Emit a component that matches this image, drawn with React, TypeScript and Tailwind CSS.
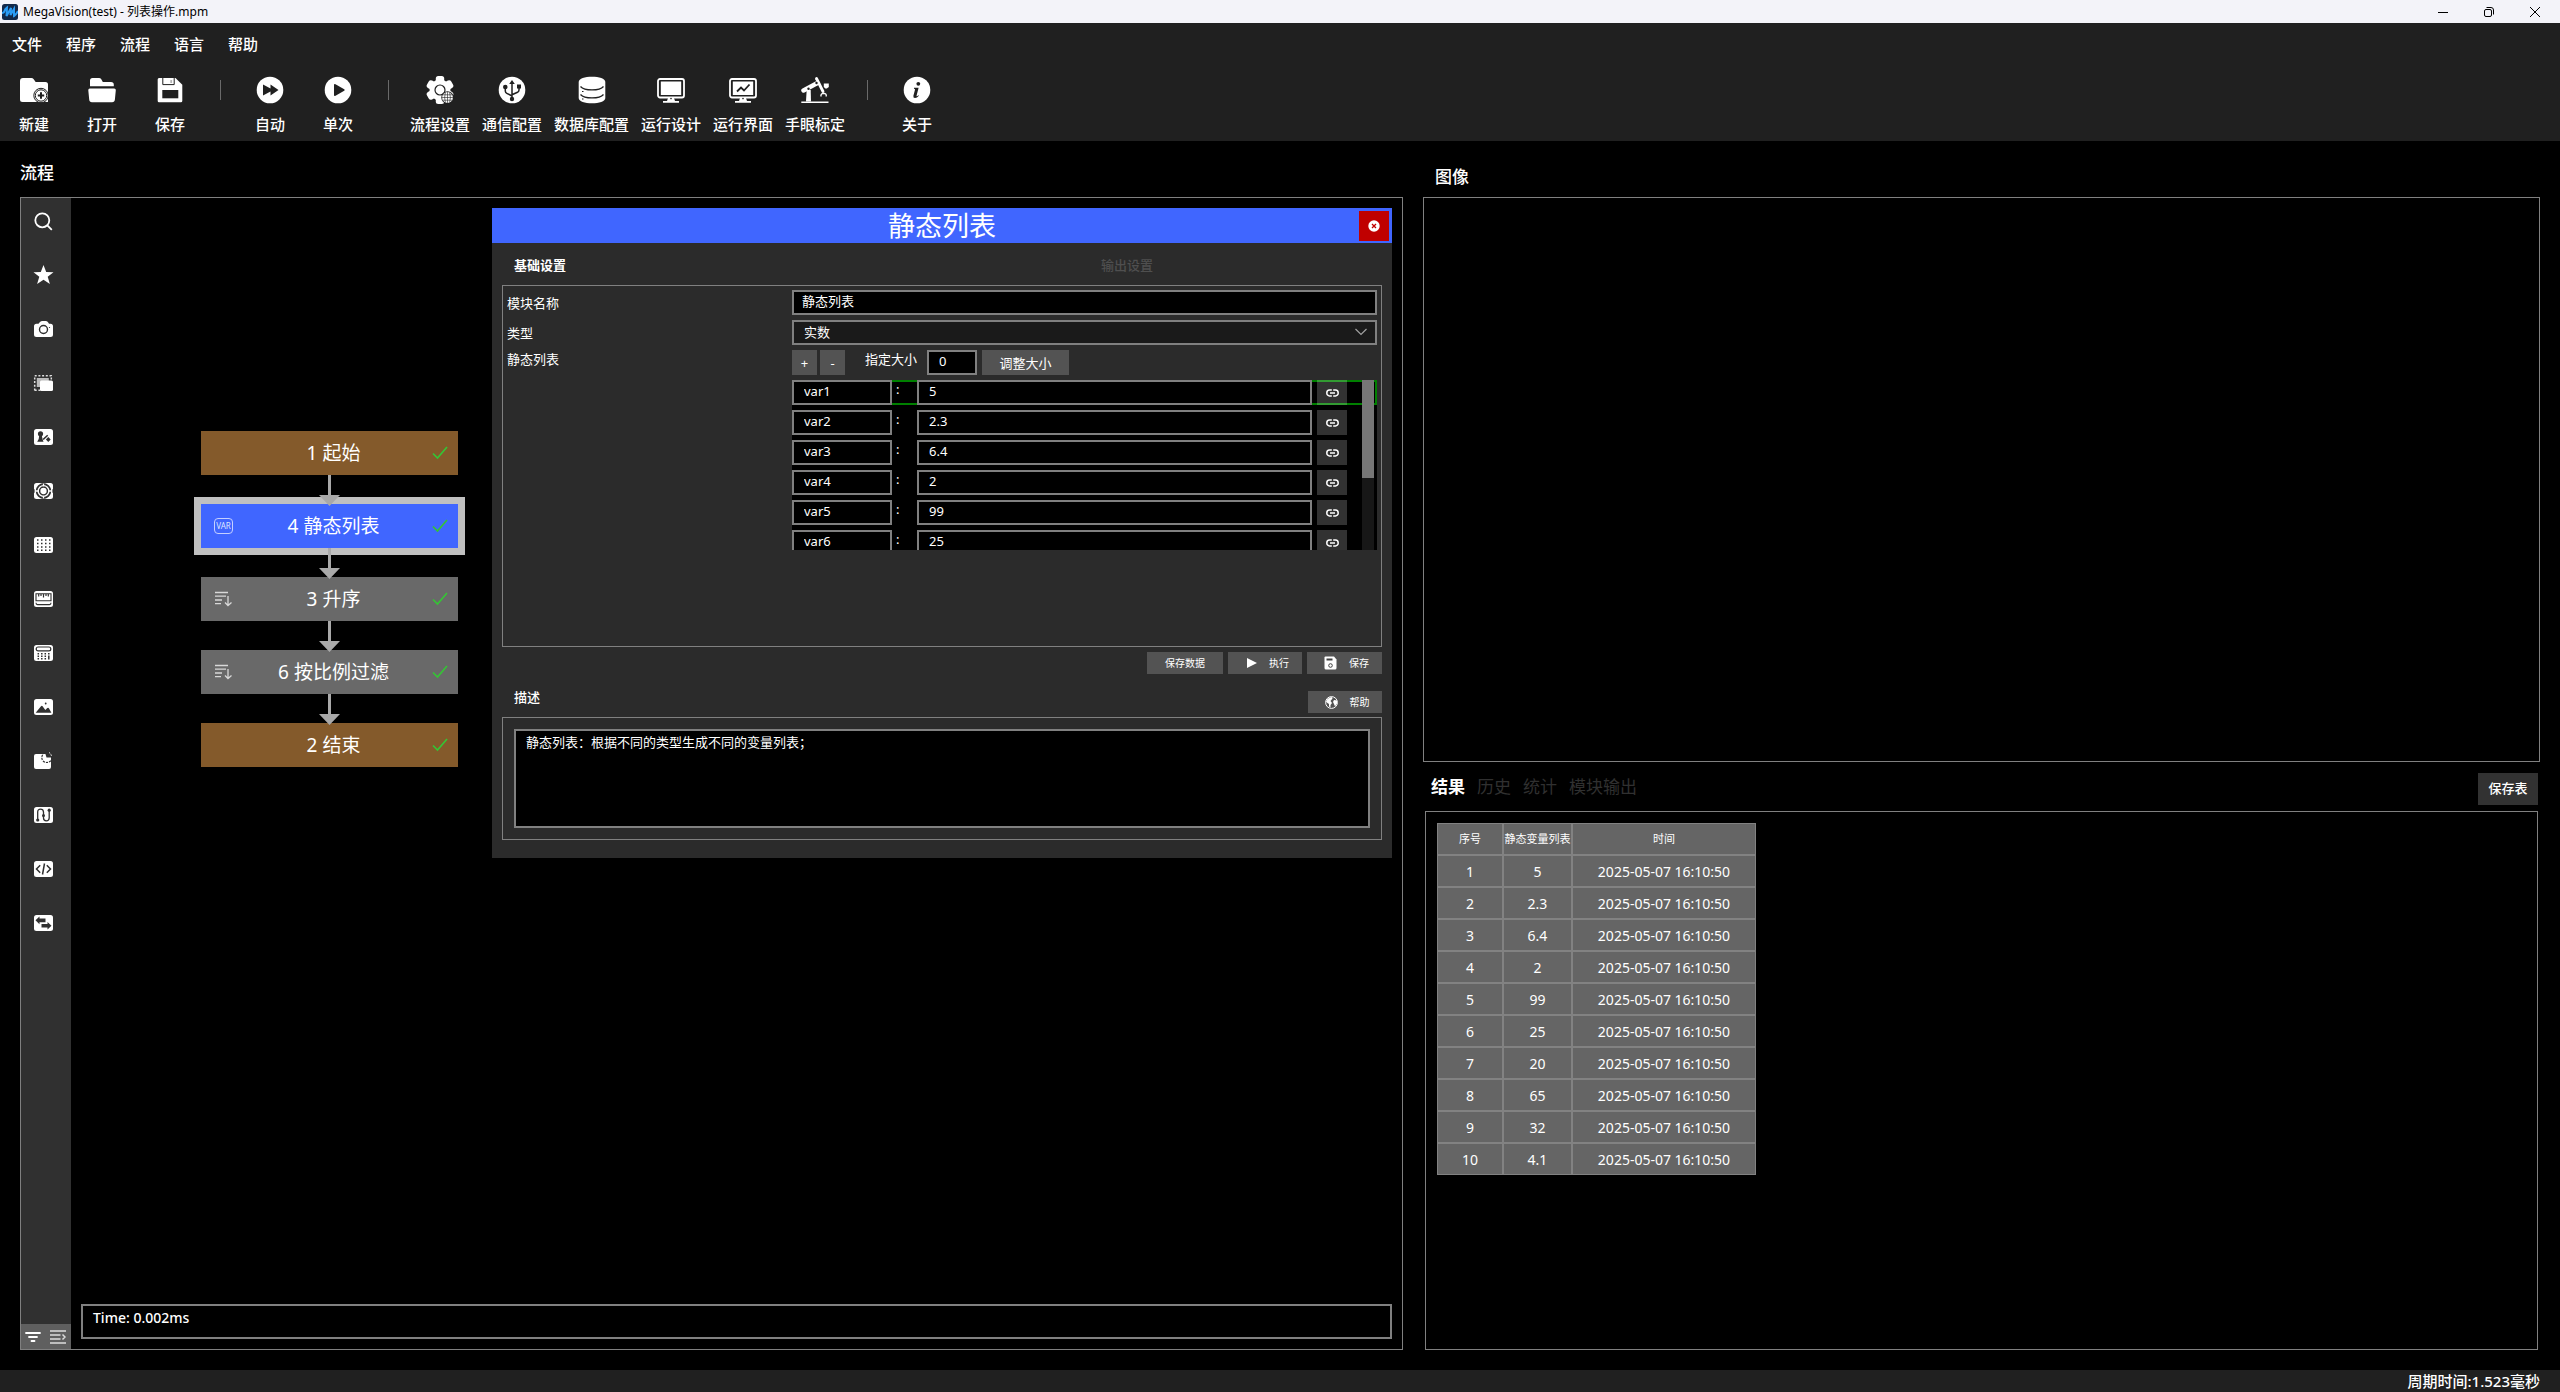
import React, { useState } from "react";

type IconProps = { children: React.ReactNode };

// 28px toolbar glyph
const ToolIcon = ({ children }: IconProps) => (
  <svg className="h-7 w-7" viewBox="0 0 28 28" fill="#fff" aria-hidden="true">
    {children}
  </svg>
);

// 19x16 sidebar glyph
const SideIcon = ({ children }: IconProps) => (
  <svg className="h-4 w-[19px] overflow-visible" viewBox="0 0 19 16" fill="#fff" aria-hidden="true">
    {children}
  </svg>
);

const Tile = () => <rect width="19" height="16" rx="2.5" />;

const Monitor = ({ children }: IconProps) => (
  <ToolIcon>
    <rect x="1" y="3" width="26" height="18.5" rx="2" fill="none" stroke="#fff" strokeWidth="1.8" />
    {children}
    <path d="M11 22h6l1 3h-8z M6 25h16v1.8H6z" />
    <circle cx="14" cy="22.6" r=".8" fill="#202020" />
  </ToolIcon>
);

const menus = ["文件", "程序", "流程", "语言", "帮助"];

const toolGroups = [
  [
    {
      label: "新建",
      icon: (
        <ToolIcon>
          <path d="M3 2h8.5q1.2 0 2 1l2.2 3H25.500q2.500 0 2.500 2.500V26H2.500Q0 26 0 23.500V5Q0 2 3 2z" />
          <circle cx="21" cy="19.500" r="7.200" stroke="#202020" strokeWidth="1" />
          <circle cx="21" cy="19.500" r="5.700" stroke="#202020" strokeWidth="1" />
          <path d="M21 16.300v6.400M17.800 19.500h6.400" stroke="#202020" strokeWidth="2" />
        </ToolIcon>
      ),
    },
    {
      label: "打开",
      icon: (
        <ToolIcon>
          <path d="M4.500 2h6.500q1.500 0 2.300 1.200L14.800 6H23q2.800 0 2.800 2.800V10.200H2V4.500Q2 2 4.500 2z" />
          <path d="M1.800 12.600h24.400q1.800 0 1.600 1.700l-.9 9.200q-.3 2.700-2.800 2.700H4q-2.600 0-2.800-2.700L.3 14.300q-.1-1.700 1.500-1.700z" />
        </ToolIcon>
      ),
    },
    {
      label: "保存",
      icon: (
        <ToolIcon>
          <path d="M3 2h16.500L26.300 8.800V24.800q0 1.500-1.500 1.500H3q-1.300 0-1.300-1.500V3.500Q1.700 2 3 2z" />
          <path d="M6.800 2v6.600h11.400V2" fill="none" stroke="#202020" strokeWidth="1" />
          <path d="M14.300 4v3h1.800v-3z" fill="#b5b5b5" />
          <path d="M6.300 14h16v8.300h-16z" fill="#202020" />
        </ToolIcon>
      ),
    },
  ],
  [
    {
      label: "自动",
      icon: (
        <ToolIcon>
          <circle cx="14" cy="14" r="13.300" />
          <path d="M7 8.500l7.500 4V8.500L22.500 14l-8 5.500V15.500L7 19.500z" fill="#202020" />
        </ToolIcon>
      ),
    },
    {
      label: "单次",
      icon: (
        <ToolIcon>
          <circle cx="14" cy="14" r="13.300" />
          <path d="M10 9q0-1.500 1.500-.8l8.700 5q1.200.8 0 1.600l-8.700 5q-1.500.7-1.500-.8z" fill="#202020" />
        </ToolIcon>
      ),
    },
  ],
  [
    {
      label: "流程设置",
      icon: (
        <ToolIcon>
          <circle cx="14" cy="14" r="10.500" />
          {[0, 60, 120, 180, 240, 300].map((a) => (
            <rect key={a} x="9.800" y="0" width="8.400" height="8" rx="2.500" transform={`rotate(${a} 14 14)`} />
          ))}
          <circle cx="14" cy="14" r="5" fill="none" stroke="#202020" strokeWidth="1.200" />
          <circle cx="21.500" cy="21.500" r="6.200" fill="#202020" />
          <circle cx="21.500" cy="21.500" r="5.400" />
          <path
            d="M16 21.500h11M17 18.800h9M17 24.200h9M21.500 16v11M19.400 16.500q-1.600 5 0 10M23.600 16.500q1.600 5 0 10"
            fill="none"
            stroke="#202020"
            strokeWidth=".6"
          />
        </ToolIcon>
      ),
    },
    {
      label: "通信配置",
      icon: (
        <ToolIcon>
          <circle cx="14" cy="14" r="13.300" />
          <path d="M14 22V7M7.300 12v3q0 1.500 1.500 2.300L14 20M21 11v3q0 1.500-1.500 2.300L14 18.800" fill="none" stroke="#202020" strokeWidth="1.500" />
          <path d="M14 4l2.800 4h-5.600zM19 8.500h4v4h-4z" fill="#202020" />
          <circle cx="7.300" cy="11" r="2.300" fill="#202020" />
          <circle cx="14" cy="23" r="2.200" fill="#202020" />
        </ToolIcon>
      ),
    },
    {
      label: "数据库配置",
      icon: (
        <ToolIcon>
          <path d="M.7 6C.7 2.500 7 .7 14 .7S27.300 2.500 27.300 6v16c0 3.500-6.300 5.300-13.300 5.300S.7 25.500.7 22z" />
          <path d="M2.500 10.500c4 4.600 19 4.600 23 0M2.500 18.500c4 4.600 19 4.600 23 0" fill="none" stroke="#202020" strokeWidth="1.300" />
          <path d="M4 15.500h1.500M4 23h1.500" stroke="#202020" strokeWidth="1.200" />
        </ToolIcon>
      ),
    },
    {
      label: "运行设计",
      icon: (
        <Monitor>
          <path d="M3.800 5.500h20.400v13.500H3.800z" />
        </Monitor>
      ),
    },
    {
      label: "运行界面",
      icon: (
        <Monitor>
          <path d="M3.800 5.500h20.400v13.500H3.800z" />
          <path d="M8 15.500l4-4 3 3 5.500-6" fill="none" stroke="#202020" strokeWidth="1.800" />
        </Monitor>
      ),
    },
    {
      label: "手眼标定",
      icon: (
        <ToolIcon>
          <path d="M.3 25.500h27.200v1.500H.3z" />
          <path d="M5 25.500l.7-11.500h4L10 25.500z" />
          <path d="M2.500 14.500L15.500 7.500" stroke="#fff" strokeWidth="4.500" strokeLinecap="round" />
          <path d="M15.500 2.500l6.500 13" stroke="#fff" strokeWidth="2.800" strokeLinecap="round" />
          <circle cx="15.500" cy="7" r="1.200" fill="#202020" />
          <circle cx="7.500" cy="12.800" r="1.200" fill="#202020" />
          <path d="M20 20.500q-.5-3 2.700-3.300 3 .3 2.500 3.300" fill="none" stroke="#fff" strokeWidth="1.400" />
          <path d="M22.800 7.500h5v3.500l-2 1.500h-1.500l-1.500-1.500z" />
        </ToolIcon>
      ),
    },
  ],
  [
    {
      label: "关于",
      icon: (
        <ToolIcon>
          <circle cx="14" cy="14" r="13.300" />
          <circle cx="15.300" cy="7.800" r="1.900" fill="#202020" />
          <path d="M11 11.800h4.600l-2 7.800q-.3 1.300 1.800-.4l.5.600q-2 2.300-4 2.200-2 0-1.500-2.200l1.600-6q.2-1-1-1z" fill="#202020" />
        </ToolIcon>
      ),
    },
  ],
];

const D = "#303030";

const sideTools = [
  {
    name: "搜索",
    icon: (
      <g fill="none" stroke="#fff" strokeWidth="1.800">
        <circle cx="8.300" cy="7.300" r="7" />
        <path d="M13.300 12.300l4.500 4.500" />
      </g>
    ),
  },
  { name: "收藏", icon: <path d="M9.500-2l2.700 7 7.300.2-5.800 4.500 2.200 7.200-6.400-4.200-6.400 4.200 2.200-7.200L-.5 5.200l7.300-.2z" /> },
  {
    name: "相机",
    icon: (
      <>
        <path d="M5.500 1.500Q6.500 0 8 0h4q1.500 0 2.200 1.500L15 2.800h1.500Q19 2.800 19 5.300v8.200q0 2.500-2.500 2.500h-14Q0 16 0 13.500V5.300q0-2.500 2.500-2.500h2z" />
        <circle cx="9.500" cy="8.500" r="4" fill="none" stroke={D} strokeWidth="1.400" />
        <circle cx="15.500" cy="6.500" r=".6" fill={D} />
      </>
    ),
  },
  {
    name: "区域",
    icon: (
      <>
        <path d="M.7 15.500V.7h16.600v4M.7 15.300h6" fill="none" stroke="#ddd" strokeWidth="1.500" strokeDasharray="2 1.700" />
        <path d="M2.800 3h12v9h-12z" fill="#bbb" />
        <rect x="6" y="5.500" width="13" height="10.500" rx="1.500" />
      </>
    ),
  },
  {
    name: "定位",
    icon: (
      <>
        <Tile />
        <g fill={D}>
          <circle cx="6.500" cy="4.800" r="2.600" />
          <path d="M5.300 6h2.400l.8 4 1 2.800H3.200l1.500-2.800z" />
          <path d="M8.500 10l4.700-4.300 1 1-4.500 4.300z" />
          <path d="M14.300 8l2.400 2.500-2.400 2.500-2.400-2.500z" />
        </g>
      </>
    ),
  },
  {
    name: "标定",
    icon: (
      <>
        <Tile />
        <circle cx="9.500" cy="8" r="6.900" fill="none" stroke={D} strokeWidth="1.700" />
        <circle cx="9.500" cy="8" r="3.900" fill="none" stroke={D} strokeWidth="1.500" />
        <path d="M9.500 0v3.300M9.500 12.700V16M1 8h3.800M14.200 8H18" stroke="#fff" strokeWidth="1.300" />
        <path d="M7.500 0h4M7.500 16h4M0 6.300v3.400M19 6.300v3.400" stroke={D} strokeWidth="1.200" />
      </>
    ),
  },
  {
    name: "网格",
    icon: (
      <>
        <Tile />
        <path d="M3 3h14M3 6.500h14M3 10h14M3 13.300h14" stroke={D} strokeWidth="1.500" strokeDasharray="1.500 2.500" />
      </>
    ),
  },
  {
    name: "测量",
    icon: (
      <>
        <Tile />
        <path d="M2 2.800h15v7H2zM2 11.800q0 1.800 1.500 1.800h12q1.500 0 1.500-1.800" fill="none" stroke={D} strokeWidth="1.100" />
        <path d="M4.700 3v2.500M7 3v2M9.500 3v3.500M12 3v2M14.300 3v2.500" stroke={D} strokeWidth="1.200" />
      </>
    ),
  },
  {
    name: "计算",
    icon: (
      <>
        <Tile />
        <rect x="2.200" y="2" width="14.600" height="3.800" rx="1.900" fill="none" stroke={D} strokeWidth="1.200" />
        <path d="M4.300 8v6.500M7.800 8v6.500M11.300 8v6.500" stroke={D} strokeWidth="1.500" strokeDasharray="1.500 1" />
        <path d="M14.800 8v1.500M14.800 10.500v4" stroke={D} strokeWidth="1.500" />
      </>
    ),
  },
  {
    name: "图像",
    icon: (
      <>
        <Tile />
        <path d="M1.700 13.800L7 7.200q.8-.8 1.600 0L11.300 11l2-2q1-.8 1.600.2l2.500 4.600z" fill={D} />
        <circle cx="11.700" cy="4.500" r=".9" fill={D} />
      </>
    ),
  },
  {
    name: "缺陷",
    icon: (
      <>
        <rect y="1" width="17" height="15" rx="2" />
        <circle cx="12.800" cy="4.500" r="5" fill="none" stroke={D} strokeWidth="1.200" strokeDasharray="2.200 1" />
        <path d="M12.500 4.500L11-.5q7 0 6.500 5z" fill={D} />
        <path d="M15-.5q2.300 1.300 2.500 4" fill="none" stroke="#fff" strokeWidth="1" strokeDasharray="1.500 1.200" />
      </>
    ),
  },
  {
    name: "流程",
    icon: (
      <>
        <Tile />
        <path d="M3.700 13V5q0-2.800 2.800-2.800T9.500 5v6q0 2.800 2.800 2.800t2.900-2.800V3" fill="none" stroke={D} strokeWidth="1.300" />
        <g fill={D}>
          <circle cx="3.700" cy="13" r="1.600" />
          <circle cx="9.500" cy="8.500" r="1.500" />
          <circle cx="15.200" cy="3.200" r="1.600" />
        </g>
      </>
    ),
  },
  {
    name: "脚本",
    icon: (
      <>
        <Tile />
        <path d="M6.200 4.300L2.500 8l3.700 3.700M12.800 4.300L16.500 8l-3.700 3.700M10.500 2.500l-2 11" fill="none" stroke={D} strokeWidth="1.500" />
      </>
    ),
  },
  {
    name: "通信",
    icon: (
      <>
        <Tile />
        <path d="M1.500 5.300L5.500 1.500v2h6v3.700h-6v2zM17.500 10.700l-4-3.800v2h-6v3.700h6v2z" fill={D} />
      </>
    ),
  },
];

const SortIcon = () => (
  <svg className="h-4 w-[19px]" viewBox="0 0 19 16" fill="none" stroke="#d8d8d8" strokeWidth="1.300" aria-hidden="true">
    <path d="M1 1.500h13M1 5.200h11M1 9h7M1 12.700h6M14 5v9.500M11 11.500l3 3 3.500-3" />
  </svg>
);

const VarIcon = () => (
  <span className="flex h-4 w-[19px] items-center justify-center rounded-sm border border-[#c5d0ff] text-[8px] leading-none text-[#dfe6ff]">
    VAR
  </span>
);

const nodes = [
  { id: 1, name: "起始", color: "bg-[#845a2b]", icon: null },
  { id: 4, name: "静态列表", color: "bg-[#4066ff] outline-[7px] outline-[#c0c0c0]", icon: <VarIcon /> },
  { id: 3, name: "升序", color: "bg-[#696969]", icon: <SortIcon /> },
  { id: 6, name: "按比例过滤", color: "bg-[#696969]", icon: <SortIcon /> },
  { id: 2, name: "结束", color: "bg-[#845a2b]", icon: null },
];

const values = ["5", "2.3", "6.4", "2", "99", "25", "20", "65", "32", "4.1"];
const visibleRows = 6;
const resultTabs = ["结果", "历史", "统计", "模块输出"];

function TitleBar() {
  return (
    <header className="flex h-[23px] items-center bg-[#f3f3f9] pr-0.5 pl-0.5 text-xs text-black">
      <svg className="mr-[5px] h-4 w-4" viewBox="0 0 16 16" aria-hidden="true">
        <rect width="16" height="16" rx="2.500" fill="#12294a" />
        <path d="M0 9q2 0 2.500-2T5 3.500L4.500 12 9 4l-.5 7L12 5v7q2-1 4-5" fill="none" stroke="#2a9cf5" strokeWidth="2" />
      </svg>
      <span className="grow">MegaVision(test) - 列表操作.mpm</span>
      <button aria-label="最小化" className="flex h-full w-[46px] items-center justify-center">
        <svg className="h-2.5 w-2.5" viewBox="0 0 10 10" stroke="#000"><path d="M0 5.500h10" /></svg>
      </button>
      <button aria-label="还原" className="flex h-full w-[46px] items-center justify-center">
        <svg className="h-2.5 w-2.5" viewBox="0 0 10 10" fill="none" stroke="#000">
          <rect x=".5" y="2.500" width="7" height="7" rx="1.500" />
          <path d="M2.500.5H7q2.500 0 2.500 2.500v4.500" />
        </svg>
      </button>
      <button aria-label="关闭" className="flex h-full w-[46px] items-center justify-center">
        <svg className="h-2.5 w-2.5" viewBox="0 0 10 10" stroke="#000"><path d="M0 0l10 10M10 0L0 10" /></svg>
      </button>
    </header>
  );
}

function Toolbar() {
  return (
    <div className="bg-[#202020] text-[15px] font-medium">
      <nav className="flex h-11 items-center pb-0.5">
        {menus.map((m) => (
          <button key={m} className="px-3">{m}</button>
        ))}
      </nav>
      <div className="flex h-[74px] pt-[9px]">
        {toolGroups.map((group, i) => (
          <React.Fragment key={i}>
            {i > 0 && (
              <div className="flex w-8 justify-center pt-1">
                <div className="h-5 w-px bg-[#6a6a6a]" />
              </div>
            )}
            {group.map((t) => (
              <button key={t.label} className="flex min-w-[68px] flex-col items-center gap-2.5 px-1.5 leading-5">
                {t.icon}
                {t.label}
              </button>
            ))}
          </React.Fragment>
        ))}
      </div>
    </div>
  );
}

function Sidebar() {
  return (
    <aside className="flex w-[50px] shrink-0 flex-col justify-between bg-[#303030]">
      <div className="flex flex-col gap-2.5 pt-px">
        {sideTools.map((t) => (
          <button key={t.name} aria-label={t.name} className="flex h-11 items-center pl-[13px]">
            <SideIcon>{t.icon}</SideIcon>
          </button>
        ))}
      </div>
      <div className="flex h-[25px] items-center justify-between bg-[#5f5f5f] pr-[5px] pl-1">
        <button aria-label="筛选">
          <svg className="h-3 w-4" viewBox="0 0 16 12" stroke="#fff" strokeWidth="1.800" strokeLinecap="round"><path d="M1 2h14M4 6h8M6.500 10h3" /></svg>
        </button>
        <button aria-label="展开">
          <svg className="h-3.5 w-4" viewBox="0 0 16 14" stroke="#ddd" strokeWidth="1.500" fill="none"><path d="M0 1h16M0 5h10.500M0 9h10.500M0 13h16M12.500 4.500L15 7l-2.500 2.500" /></svg>
        </button>
      </div>
    </aside>
  );
}

function Flow() {
  return (
    <div className="absolute top-[233px] left-[130px] flex w-[257px] flex-col">
      {nodes.map((n, i) => (
        <React.Fragment key={n.id}>
          {i > 0 && (
            <svg className="relative z-10 h-[29px] w-full overflow-visible" aria-hidden="true">
              <path d="M127 0h3v20h9l-10.500 11L118 20h9z" fill="#a9a9a9" />
            </svg>
          )}
          <div className={`grid h-11 grid-cols-[34px_1fr_26px] items-center text-[19px] ${n.color}`}>
            <span className="pl-[13px]">{n.icon}</span>
            <span className="text-center">{n.id} {n.name}</span>
            <svg className="h-3.5 w-4" viewBox="0 0 16 14" fill="none" stroke="#35c435" strokeWidth="1.700" aria-hidden="true">
              <path d="M1 7.500l4.500 4.500L15 1" />
            </svg>
          </div>
        </React.Fragment>
      ))}
    </div>
  );
}

const LinkIcon = () => (
  <svg className="h-2 w-[13px]" viewBox="0 0 13 8" fill="none" stroke="#fff" strokeWidth="1.500" aria-hidden="true">
    <path d="M5.800 1H3.500a2.700 3 0 0 0 0 6h2.300M7.200 1h2.300a2.700 3 0 0 1 0 6H7.200M4 4h5" />
  </svg>
);

const field = "h-[25px] border-2 border-[#808080] bg-black pb-1 outline-none";
const smallButton = "flex h-[22px] items-center justify-center bg-[#535353] text-[10px]";

function StaticListDialog() {
  const [name, setName] = useState("静态列表");
  const [size, setSize] = useState("0");

  return (
    <section className="absolute top-2.5 right-2.5 flex w-[900px] flex-col bg-[#2b2b2b] text-[13px] leading-[18px]">
      <div className="grid h-[35px] grid-cols-[33px_1fr_33px] items-center bg-[#4066ff]">
        <h2 className="col-start-2 text-center text-[27px] leading-[35px]">静态列表</h2>
        <button aria-label="关闭" className="flex h-[30px] w-[30px] items-center justify-center bg-[#c00000]">
          <svg className="h-3 w-3" viewBox="0 0 12 12">
            <circle cx="6" cy="6" r="5.700" fill="#fff" />
            <path d="M4 4l4 4M8 4l-4 4" stroke="#c00000" strokeWidth="1.300" />
          </svg>
        </button>
      </div>

      {/* 选项卡 */}
      <div className="flex h-[42px] items-center pt-0.5">
        <button className="w-[609px] pl-[22px] text-left font-bold">基础设置</button>
        <button className="font-medium text-[#4f4f4f]">输出设置</button>
      </div>

      <div className="mx-2.5 grid h-[362px] grid-cols-[285px_1fr] content-start gap-y-[5px] border border-[#808080] p-1">
        <label htmlFor="module-name" className="self-center">模块名称</label>
        <input id="module-name" className={`px-2 ${field}`} value={name} onChange={(e) => setName(e.target.value)} />

        <label htmlFor="data-type" className="self-center">类型</label>
        <div className="relative flex">
          <select id="data-type" className="h-[25px] grow appearance-none border-2 border-[#808080] bg-[#1a1a1a] px-2.5 pb-0.5 outline-none">
            <option>实数</option>
            <option>整数</option>
            <option>字符串</option>
          </select>
          <svg className="pointer-events-none absolute top-2 right-2.5 h-2 w-3" viewBox="0 0 12 8" fill="none" stroke="#a0a0a0" strokeWidth="1.200">
            <path d="M.5 1L6 6.500 11.500 1" />
          </svg>
        </div>

        <span>静态列表</span>
        <div className="flex flex-col gap-[5px]">
          <div className="flex h-[25px]">
            <button className="mr-[3px] w-[25px] bg-[#535353]">+</button>
            <button className="mr-5 w-[25px] bg-[#535353]">-</button>
            <label htmlFor="list-size" className="w-[62px]">指定大小</label>
            <input id="list-size" className={`w-[50px] px-2.5 ${field}`} value={size} onChange={(e) => setSize(e.target.value)} />
            <button className="ml-[5px] w-[87px] bg-[#535353]">调整大小</button>
          </div>
          <div className="relative h-[170px] overflow-hidden bg-black">
            <div className="flex flex-col gap-[5px]">
              {values.slice(0, visibleRows).map((v, i) => (
                <div key={i} className={`flex h-[25px] pr-[30px] ${i === 0 ? "shadow-[inset_0_0_0_2px_#008000]" : ""}`}>
                  <input aria-label={`变量名 ${i + 1}`} className={`w-[100px] px-2.5 ${field}`} defaultValue={`var${i + 1}`} />
                  <span className="w-[25px] pl-1">:</span>
                  <input aria-label={`变量值 ${i + 1}`} className={`min-w-0 grow px-2.5 ${field}`} defaultValue={v} />
                  <button
                    aria-label="链接"
                    className={`ml-[5px] flex w-[30px] items-center justify-center bg-[#323232] ${i === 0 ? "border-y-2 border-[#329b32]" : ""}`}
                  >
                    <LinkIcon />
                  </button>
                </div>
              ))}
            </div>
            <div className="absolute top-0 right-[3px] h-full w-3 bg-[#171717]">
              <div className="h-[98px] bg-[#767676]" />
            </div>
          </div>
        </div>
      </div>

      <div className="mx-2.5 mt-[5px] flex justify-end gap-[5px]">
        <button className={`w-[76px] ${smallButton}`}>保存数据</button>
        <button className={`w-[74px] gap-3 pl-1.5 ${smallButton}`}>
          <svg className="h-3 w-2.5" viewBox="0 0 10 12" fill="#fff"><path d="M0 1l10 5-10 5z" /></svg>
          执行
        </button>
        <button className={`w-[75px] gap-3 pl-1 ${smallButton}`}>
          <svg className="h-3.5 w-[13px]" viewBox="0 0 13 14">
            <path d="M1.500.5h8.500l2.500 3V12q0 1.500-1.500 1.500H2Q.5 13.500.5 12V1.500Q.5.500 1.500.5z" fill="#fff" />
            <path d="M2.500 2.500h6v2h-6z" fill="#404040" />
            <circle cx="6.500" cy="9.500" r="1.800" fill="none" stroke="#404040" />
          </svg>
          保存
        </button>
      </div>

      <div className="mx-2.5 mt-[17px] flex h-[26px] items-start justify-between">
        <label htmlFor="module-desc" className="pl-3 leading-3 font-medium">描述</label>
        <button className={`w-[74px] gap-3 pl-1 ${smallButton}`}>
          <svg className="h-[13px] w-[13px]" viewBox="0 0 13 13">
            <circle cx="6.500" cy="6.500" r="5.900" fill="none" stroke="#fff" />
            <path d="M2 3.500Q4 1 7 1l.5 1.500L5.500 5 7 7l-1.500 2v2.500L4 10.500V8L1 6zM9 4l3 .5v3l-2 3-1-2.500L8 6z" fill="#fff" />
          </svg>
          帮助
        </button>
      </div>

      <div className="mx-2.5 mb-[18px] flex border border-[#808080] p-[11px]">
        <textarea
          id="module-desc"
          className="h-[99px] grow resize-none border-2 border-[#808080] bg-black px-2.5 py-0.5 outline-none"
          defaultValue="静态列表：根据不同的类型生成不同的变量列表；"
        />
      </div>
    </section>
  );
}

function ResultTable() {
  const cell = "border border-[#828282] p-0 font-normal";
  return (
    <table className="w-[319px] table-fixed border-separate border-spacing-0 bg-[#656565] text-center text-[14px]">
      <thead>
        <tr className="h-8 text-[11px]">
          <th className={`w-[66px] ${cell}`}>序号</th>
          <th className={`w-[69px] whitespace-nowrap ${cell}`}>静态变量列表</th>
          <th className={cell}>时间</th>
        </tr>
      </thead>
      <tbody>
        {values.map((v, i) => (
          <tr key={i} className="h-8">
            <td className={cell}>{i + 1}</td>
            <td className={cell}>{v}</td>
            <td className={cell}>2025-05-07 16:10:50</td>
          </tr>
        ))}
      </tbody>
    </table>
  );
}

export default function App() {
  const [tab, setTab] = useState("结果");

  return (
    <div className="flex min-h-screen flex-col bg-black font-['Noto_Sans','Noto_Sans_CJK_SC',sans-serif] text-white">
      <TitleBar />
      <Toolbar />

      <main className="grid grow grid-cols-[1383fr_1117fr] gap-5 px-5 pb-5">
        <div className="flex flex-col">
          <h1 className="flex h-14 items-end pb-3 text-[17px] leading-6 font-medium">流程</h1>
          <div className="flex grow border border-[#808080]">
            <Sidebar />
            <div className="relative flex grow flex-col justify-end p-2.5">
              <Flow />
              <StaticListDialog />
              <output className="h-[35px] border-2 border-[#808080] px-2.5 pt-px text-[14px] font-medium">
                Time: 0.002ms
              </output>
            </div>
          </div>
        </div>

        <div className="grid grid-rows-[56px_565fr_49px_539fr]">
          <h1 className="flex items-end pb-2 pl-3 text-[17px] leading-6 font-medium">图像</h1>
          <div className="border border-[#808080]" />
          <div className="flex items-center justify-between pr-0.5 pl-2">
            <div className="flex gap-3 text-[17px]">
              {resultTabs.map((t) => (
                <button key={t} onClick={() => setTab(t)} className={t === tab ? "font-bold" : "text-[#303030]"}>
                  {t}
                </button>
              ))}
            </div>
            <button className="mt-1 h-8 w-[60px] bg-[#323232] text-[13px] font-medium">保存表</button>
          </div>
          <div className="mx-0.5 border border-[#808080] p-[11px]">
            <ResultTable />
          </div>
        </div>
      </main>

      <footer className="flex h-[22px] items-center justify-end bg-[#202020] pr-5 text-[15px] leading-5 font-medium">
        周期时间:1.523毫秒
      </footer>
    </div>
  );
}
